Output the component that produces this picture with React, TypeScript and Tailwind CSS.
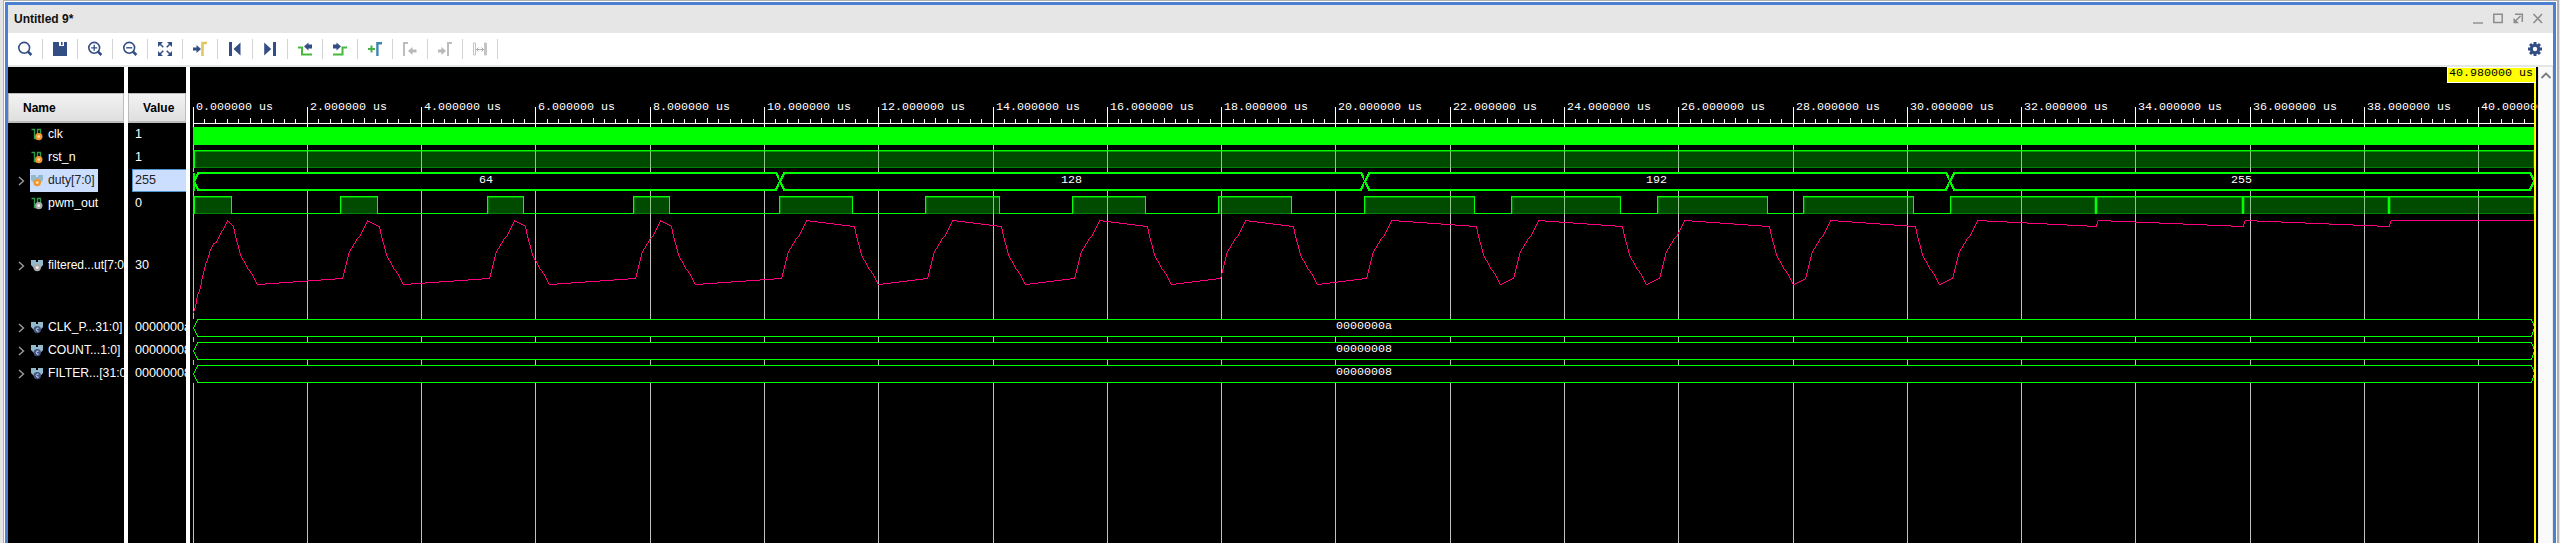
import React from "react";

const NAVY = "#334e85";
const GREEN = "#00ff00";

/* ---------- toolbar icons (16 x 16) ---------- */

function Icon({ children }: { children: React.ReactNode }) {
  return (
    <svg width="16" height="16" viewBox="0 0 16 16" fill="none" className="block shrink-0">
      {children}
    </svg>
  );
}

function Lens({ children }: { children?: React.ReactNode }) {
  return (
    <Icon>
      <circle cx="7.2" cy="6.8" r="5.4" stroke={NAVY} strokeWidth="1.6" />
      <path d="M11 10.6L14.4 14" stroke={NAVY} strokeWidth="2.6" />
      {children}
    </Icon>
  );
}

const tools: React.ReactNode[] = [
  <Lens />,
  <Icon>
    <path d="M1 1H7V5H12V1H15V15H1Z" fill={NAVY} />
    <path d="M9 1H10.6V4H9Z" fill={NAVY} />
  </Icon>,
  <Lens>
    <path d="M7.2 3.8V9.8M4.2 6.8H10.2" stroke={NAVY} strokeWidth="1.3" />
  </Lens>,
  <Lens>
    <path d="M4.2 6.8H10.2" stroke={NAVY} strokeWidth="1.4" />
  </Lens>,
  <Icon>
    <path d="M1 1H6L1 6ZM15 1V6L10 1ZM1 15V10L6 15ZM15 15H10L15 10Z" fill={NAVY} />
    <path d="M2 2L6.3 6.3M14 2L9.7 6.3M2 14L6.3 9.7M14 14L9.7 9.7" stroke={NAVY} strokeWidth="1.5" />
  </Icon>,
  <Icon>
    <path d="M1 6.5H4.5V4L9 8L4.5 12V9.5H1Z" fill={NAVY} />
    <path d="M10.5 15V2H15" stroke="#e2c662" strokeWidth="2.6" />
  </Icon>,
  <Icon>
    <path d="M2 1H5V15H2ZM13.5 1.5V14.5L6.5 8Z" fill={NAVY} />
  </Icon>,
  <Icon>
    <path d="M11 1H14V15H11ZM2.2 1.5V14.5L9.2 8Z" fill={NAVY} />
  </Icon>,
  <Icon>
    <path d="M1 6.5H5V13.5H15" stroke="#46b93c" strokeWidth="2" />
    <path d="M15 3.5H11.5V1.5L7 5.5L11.5 9.5V7.5H15Z" fill={NAVY} />
  </Icon>,
  <Icon>
    <path d="M1 13.5H10.5V6.5H15" stroke="#46b93c" strokeWidth="2" />
    <path d="M1 3.5H4.5V1.5L9 5.5L4.5 9.5V7.5H1Z" fill={NAVY} />
  </Icon>,
  <Icon>
    <path d="M1 8H8M4.5 4.5V11.5" stroke="#46b04a" strokeWidth="2" />
    <path d="M10.4 15V2.2H15" stroke="#3f84b4" strokeWidth="2.4" />
  </Icon>,
  <Icon>
    <path d="M2 15V2H6" stroke="#bdbdbd" strokeWidth="2" />
    <path d="M14.5 8.5H10.5V6L6 10L10.5 14V11.5H14.5Z" fill="#b9b9b9" />
  </Icon>,
  <Icon>
    <path d="M11 15V2H15" stroke="#bdbdbd" strokeWidth="2" />
    <path d="M1 8.5H4.5V6L9 10L4.5 14V11.5H1Z" fill="#b9b9b9" />
  </Icon>,
  <Icon>
    <path d="M1.5 2H3.5V14H1.5Z" stroke="#c4c4c4" />
    <path d="M12.5 2H14.5V14H12.5Z" fill="#c4c4c4" stroke="#c4c4c4" />
    <path d="M4.5 8.5H11.5M6.5 6.5L4.5 8.5L6.5 10.5M9.5 6.5L11.5 8.5L9.5 10.5" stroke="#b0b0b0" />
  </Icon>,
];

function Gear() {
  return (
    <svg width="14" height="14" viewBox="-7 -7 14 14" className="block">
      {[0, 45, 90, 135].map((a) => (
        <rect key={a} x="-1.5" y="-7" width="3" height="14" fill={NAVY} transform={`rotate(${a})`} />
      ))}
      <circle r="5.2" fill={NAVY} />
      <circle r="2.2" fill="#fff" />
    </svg>
  );
}

/* ---------- signal list ---------- */

type Kind = "in" | "out" | "busIn" | "busOut" | "const";

function Badge({ kind }: { kind: Kind }) {
  if (kind === "const")
    return (
      <g>
        <circle cx="6.3" cy="8.6" r="3.7" fill="#42547f" />
        <path d="M7.6 7.2H6L5.2 8.6L6 10.1H7.6" stroke="#d5def0" fill="none" />
      </g>
    );
  const orange = kind === "in" || kind === "busIn";
  const cx = kind === "in" || kind === "out" ? 7.8 : 6.2;
  return (
    <g>
      <circle cx={cx} cy="8.6" r="3.7" fill={orange ? "#f0962c" : "#a9a9a9"} />
      <circle cx={cx} cy="8.6" r="1.4" fill={orange ? "#ffdfae" : "#f5f5f5"} />
    </g>
  );
}

function SignalIcon({ kind }: { kind: Kind }) {
  return (
    <svg width="13" height="13" viewBox="0 0 13 13" className="block shrink-0">
      {kind === "in" || kind === "out" ? (
        <path d="M0.5 1.5H3.5V10.5H6.5V1.5H9.5V8" fill="none" stroke="#2f9a4a" strokeWidth="1.4" />
      ) : (
        <path d="M0 1H5V3H7V1H12V6L9.5 9H3L0 6Z" fill="#93b9cc" />
      )}
      <Badge kind={kind} />
    </svg>
  );
}

interface Signal {
  name: string;
  value: string;
  kind: Kind;
  tall?: boolean;
  selected?: boolean;
  font?: string;
}

const signals: Signal[] = [
  { name: "clk", value: "1", kind: "in" },
  { name: "rst_n", value: "1", kind: "in", font: "text-[12.4px]" },
  { name: "duty[7:0]", value: "255", kind: "busIn", selected: true },
  { name: "pwm_out", value: "0", kind: "out", font: "text-[12.4px]" },
  { name: "filtered...ut[7:0]", value: "30", kind: "busOut", tall: true, font: "text-[12px]" },
  { name: "CLK_P...31:0]", value: "0000000a", kind: "const" },
  { name: "COUNT...1:0]", value: "00000008", kind: "const" },
  { name: "FILTER...[31:0]", value: "00000008", kind: "const" },
];

function NameRow({ s }: { s: Signal }) {
  const bus = s.kind !== "in" && s.kind !== "out";
  return (
    <div className={`flex shrink-0 items-center ${s.tall ? "h-[101px]" : "h-[23px]"}`}>
      <div className="flex w-[22px] shrink-0 justify-end pr-[5px]">
        {bus && (
          <svg width="7" height="10" viewBox="0 0 7 10" fill="none">
            <path d="M1 1L5.5 5L1 9" stroke="#9c9c9c" strokeWidth="1.4" />
          </svg>
        )}
      </div>
      <div
        className={`flex h-full items-center gap-1 pl-px whitespace-nowrap ${
          s.selected ? "bg-[#ccdeff] pr-[3px] text-[#222]" : "text-white"
        }`}
      >
        <SignalIcon kind={s.kind} />
        <span className={`leading-[23px] ${s.font ?? "text-[12.2px]"}`}>{s.name}</span>
      </div>
    </div>
  );
}

function ValueRow({ s }: { s: Signal }) {
  return (
    <div className={`flex shrink-0 items-center pl-1 ${s.tall ? "h-[101px]" : "h-[23px]"}`}>
      <div
        className={`flex h-full flex-1 items-center whitespace-nowrap text-[12.6px] ${
          s.selected
            ? "border-y border-l border-[#4f94cf] bg-[#ccdeff] pl-[2px] text-[#222]"
            : "pl-[3px] text-white"
        }`}
      >
        {s.value}
      </div>
    </div>
  );
}

function ColumnHeader({ label, pad }: { label: string; pad: string }) {
  return (
    <div
      className={`mt-[26px] flex h-[30px] shrink-0 items-center border-t border-r border-b-2 border-l border-[#bcbcbc] bg-linear-to-b from-[#f3f3f3] to-[#dfdfdf] pt-px text-[12px] font-bold text-black ${pad}`}
    >
      {label}
    </div>
  );
}

/* ---------- waveforms ---------- */

const X0 = 193;
const XEND = 2534;
const xAt = (us: number) => Math.floor(193.1 + us * 57.14);

const rises = [193, 340, 487, 633, 779, 925, 1072, 1218, 1364, 1511, 1657, 1803, 1950];
const falls = [231, 377, 523, 669, 852, 999, 1145, 1291, 1474, 1620, 1767, 1913];
const glitches = [2095, 2242, 2388];

/* Rasterised polyline: whole-pixel steps, no antialiasing. */
function pixelPath(points: number[][], w = 1): string {
  let d = "";
  for (let i = 1; i < points.length; i++) {
    const [x1, y1] = points[i - 1];
    const [x2, y2] = points[i];
    const n = Math.max(Math.abs(x2 - x1), Math.abs(y2 - y1), 1);
    let runX = x1;
    let runY = y1;
    let lastX = x1;
    for (let k = 1; k <= n; k++) {
      const x = Math.round(x1 + ((x2 - x1) * k) / n);
      const y = Math.round(y1 + ((y2 - y1) * k) / n);
      if (y !== runY) {
        d += `M${Math.min(runX, lastX)} ${runY}h${Math.abs(lastX - runX) + w}v${w}h${-(Math.abs(lastX - runX) + w)}z`;
        runX = x;
        runY = y;
      }
      lastX = x;
    }
    d += `M${Math.min(runX, lastX)} ${runY}h${Math.abs(lastX - runX) + w}v${w}h${-(Math.abs(lastX - runX) + w)}z`;
  }
  return d;
}

function analogPoints(): number[][] {
  const p: number[][] = [
    [193, 312], [195, 306], [196, 300], [197, 295], [200, 287], [201, 281], [205, 264],
    [208, 256], [209, 252], [213, 243], [216, 242], [221, 231], [223, 229], [227, 220],
  ];
  rises.forEach((s, i) => {
    if (i > 0)
      p.push([s + 2, 278], [s + 5, 266], [s + 9, 251], [s + 11, 248], [s + 17, 238], [s + 20, 235], [s + 25, 224], [s + 27, 220]);
    const e = falls[i];
    if (e !== undefined)
      p.push([e + 2, 226], [e + 4, 236], [e + 6, 243], [e + 9, 255], [e + 12, 260], [e + 17, 269], [e + 20, 273], [e + 26, 284]);
  });
  glitches.forEach((g) => p.push([g + 1, 226], [g + 2, 221], [g + 3, 220]));
  p.push([XEND, 220]);
  return p;
}

function High({ x1, x2, y }: { x1: number; x2: number; y: number }) {
  return (
    <g>
      <rect x={x1} y={y} width={x2 - x1} height="18" fill="#008000" />
      <rect x={x1 + 2} y={y + 2} width={x2 - x1 - 3} height="15" fill="#004b00" />
      <rect x={x1} y={y + 1} width={x2 - x1} height="1" fill="#009c00" />
      <rect x={x1} y={y} width={x2 - x1} height="1" fill={GREEN} />
    </g>
  );
}

/* Bus cell from a to b; w is the line thickness. */
function Bus({ a, b, y, w = 1 }: { a: number; b: number; y: number; w?: number }) {
  const bottom = y + 17;
  const mid = y + 8;
  return (
    <g>
      <rect x={a} y={y} width={b - a} height="18" fill="#000" />
      <path
        d={
          pixelPath([[a, mid], [a + 4, y], [b - 3 - (w - 1), y], [b, mid]], w) +
          pixelPath([[a, mid], [a + 4, bottom], [b - 3 - (w - 1), bottom], [b, mid]], w)
        }
        fill={GREEN}
      />
    </g>
  );
}

function Waves() {
  const majors = Array.from({ length: 21 }, (_, i) => i * 2);
  const minors = Array.from({ length: 205 }, (_, i) => i).filter((i) => i % 10 !== 0);
  const edges = [193, 779, 1364, 1949, 2533];
  return (
    <svg width="2348" height="476" viewBox="190 67 2348 476" className="block" shapeRendering="crispEdges">
      {majors.map((m) => (
        <rect key={m} x={xAt(m)} y="127" width="1" height="416" fill="#c0c0c0" />
      ))}

      <rect x={X0} y="123" width={XEND - X0} height="1" fill="#fff" />
      {majors.map((m) => (
        <rect key={m} x={xAt(m)} y="107" width="1" height="20" fill="#fff" />
      ))}
      {minors.map((i) => (
        <rect key={i} x={xAt(i / 5)} y={i % 5 === 0 ? 118 : 119} width="1" height="5" fill="#fff" />
      ))}

      <rect x={X0} y="127" width={XEND - X0} height="18" fill={GREEN} />
      <High x1={X0} x2={XEND} y={150} />
      <rect x={X0} y="150" width="2" height="18" fill={GREEN} />

      {edges.slice(0, 4).map((a, i) => (
        <Bus key={a} a={a} b={edges[i + 1]} y={172} w={2} />
      ))}
      <rect x={X0} y="173" width="2" height="18" fill={GREEN} />

      <rect x={X0} y="213" width="1758" height="1" fill={GREEN} />
      {rises.map((s, i) => {
        const e = falls[i] ?? XEND - 1;
        return (
          <g key={s}>
            <High x1={s} x2={e + 1} y={196} />
            <rect x={s} y="196" width={i === 0 ? 2 : 1} height="18" fill={GREEN} />
            {i < 12 && <rect x={e} y="196" width="1" height="18" fill={GREEN} />}
          </g>
        );
      })}
      {glitches.map((g) => (
        <g key={g}>
          <rect x={g - 1} y="198" width="4" height="16" fill="#008000" />
          <rect x={g} y="196" width="2" height="18" fill={GREEN} />
        </g>
      ))}
      {majors.slice(1).map((m) => (
        <g key={m} fill="#8fc48f">
          <rect x={xAt(m)} y="151" width="1" height="17" />
          {(xAt(m) >= 1950 || rises.some((s, i) => xAt(m) > s && xAt(m) < falls[i])) && (
            <rect x={xAt(m)} y="197" width="1" height="17" />
          )}
        </g>
      ))}

      <path d={pixelPath(analogPoints())} fill="#ff007f" />

      <Bus a={193} b={2534} y={319} />
      <Bus a={193} b={2534} y={342} />
      <Bus a={193} b={2534} y={365} />

      <g className="font-['Liberation_Mono',monospace] text-[11.67px]" fill="#fff">
        {majors.map((m) => (
          <text key={m} x={xAt(m) + 3} y="110">{`${m}.000000 us`}</text>
        ))}
        <g textAnchor="middle">
          <text x="486" y="183">64</text>
          <text x="1071.5" y="183">128</text>
          <text x="1656.5" y="183">192</text>
          <text x="2241.5" y="183">255</text>
        </g>
        <text x="1336" y="329">0000000a</text>
        <text x="1336" y="352">00000008</text>
        <text x="1336" y="375">00000008</text>
      </g>

      <rect x="2534" y="67" width="2" height="476" fill="#ffff00" />
      <rect x="2447" y="67" width="89" height="16" fill="#fff" />
      <rect x="2448" y="68" width="87" height="14" fill="#ffff00" />
      <text x="2449" y="76" className="font-['Liberation_Mono',monospace] text-[11.67px]" fill="#000">
        40.980000 us
      </text>
    </svg>
  );
}

/* ---------- window ---------- */

export default function App() {
  return (
    <div className="flex h-[543px] w-[2560px] overflow-hidden bg-[#e4e4e4] pr-px pl-[3px] font-['Liberation_Sans',Arial,sans-serif]">
      <div className="flex flex-1 border-t border-r-2 border-l border-[#b0b0b0] bg-white pt-px pr-px pl-px">
        <div className="flex flex-1 flex-col border-x-[3px] border-t-[3px] border-[#4a7fd2] bg-white">
          <div className="flex h-7 shrink-0 items-center justify-between bg-[#e6e6e6] pr-[10px] pl-[6px]">
            <span className="text-[12px] font-bold text-[#111]">Untitled 9*</span>
            <svg width="70" height="12" viewBox="0 0 70 12" fill="none" stroke="#8c8c8c" className="block">
              <path d="M0 10H10" strokeWidth="1.4" />
              <path d="M20.8 1.2H29.2V9.6H20.8Z" strokeWidth="1.5" />
              <path d="M42 1.2H49.3V9M47.5 3L43 7.5" strokeWidth="1.5" />
              <path d="M40.5 4.8V10.2H46Z" fill="#8c8c8c" stroke="none" />
              <path d="M60.5 1L69 10M69 1L60.5 10" strokeWidth="1.6" />
            </svg>
          </div>

          <div className="flex h-[34px] shrink-0 items-start justify-between border-b-2 border-[#e4e7e7] bg-white pr-[11px]">
            <div className="flex pt-[6px]">
              {tools.map((t, i) => (
                <div key={i} className="flex h-5 w-[35px] items-center justify-center border-r border-[#d4d4d4]">
                  {t}
                </div>
              ))}
            </div>
            <div className="flex h-8 items-center">
              <Gear />
            </div>
          </div>

          <div className="flex h-[476px] shrink-0 bg-white">
            <div className="flex w-[116px] shrink-0 flex-col overflow-hidden bg-black">
              <ColumnHeader label="Name" pad="pl-[14px]" />
              {signals.map((s) => (
                <NameRow key={s.name} s={s} />
              ))}
            </div>
            <div className="ml-1 flex w-[58px] shrink-0 flex-col overflow-hidden bg-black">
              <ColumnHeader label="Value" pad="pl-[14px]" />
              {signals.map((s) => (
                <ValueRow key={s.name} s={s} />
              ))}
            </div>
            <div className="ml-1 w-[2348px] shrink-0 overflow-hidden bg-black">
              <Waves />
            </div>
            <div className="flex flex-1 justify-center border-x border-[#e8e8e8] bg-[#fafafa] pt-[5px]">
              <svg width="12" height="8" viewBox="0 0 12 8" fill="none" className="shrink-0">
                <path d="M1.5 6L6 1.5L10.5 6" stroke="#7c7c7c" strokeWidth="1.8" />
              </svg>
            </div>
          </div>
        </div>
      </div>
    </div>
  );
}
